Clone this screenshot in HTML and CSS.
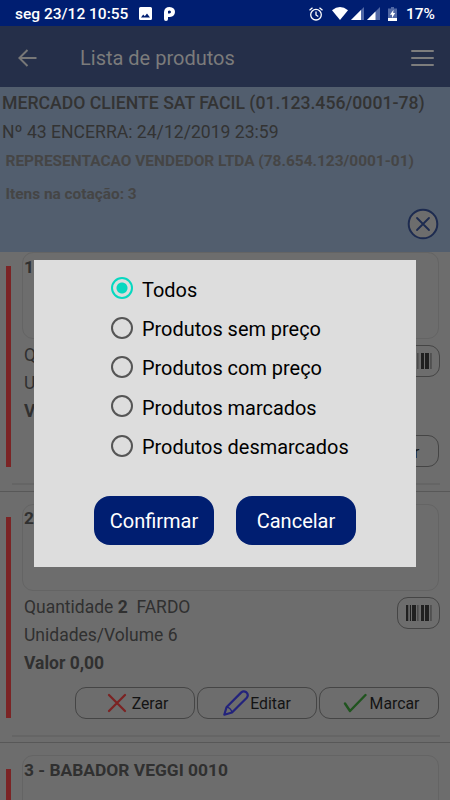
FILE: index.html
```html
<!DOCTYPE html>
<html lang="pt-BR">
<head>
<meta charset="utf-8">
<title>Lista de produtos</title>
<link rel="stylesheet" href="styles.css">
</head>
<body>
<svg class="defs" width="0" height="0">
  <symbol id="barcode" viewBox="0 0 26 16"><path fill="#202020" d="M0 0h2v16H0zM4 0h1v16H4zM6 0h4v16H6zM15 0h3v16h-3zM19 0h4v16h-4z"/><path fill="#444" d="M2.5 0h.7v16h-.7zM11 0h.8v16H11zM12.5 0h.6v16h-.6zM24 0h.7v16h-.7zM25.3 0h.6v16h-.6z"/></symbol>
  <symbol id="cross" viewBox="0 0 20 20"><path d="M2 2 18 18M18 2 2 18" fill="none" stroke="#7c2222" stroke-width="2.2" stroke-linecap="round"/></symbol>
  <symbol id="pencil" viewBox="0 0 26 26"><path d="M1.3 24.7 3.500 17.200 18.300 2.400Q20.500.5 23.300 2.300 26 5 23.800 7.700L9 22.500Z" fill="none" stroke="#23237c" stroke-width="2.200" stroke-linejoin="round"/><path d="M3.500 17.200Q7.800 17.800 9 22.500" fill="none" stroke="#23237c" stroke-width="1.300"/></symbol>
  <symbol id="check" viewBox="0 0 24 20"><path d="M2 10.5 7 18 22.5 2" fill="none" stroke="#20541f" stroke-width="2.4" stroke-linecap="round" stroke-linejoin="round"/></symbol>
</svg>
<div class="screen">
  <div class="status">
    <span class="clock">seg 23/12 10:55</span>
    <svg class="st-photo" width="13" height="13" viewBox="0 0 13 13"><path fill="#fff" fill-rule="evenodd" d="M1.5 0h10Q13 0 13 1.5v10Q13 13 11.500 13h-10Q0 13 0 11.500v-10Q0 0 1.500 0zM2 10.500h9L8 6.500 5.800 9.300 4.200 7.500z"/></svg>
    <svg class="st-p" width="11" height="14" viewBox="0 0 11 14"><path fill="#fff" fill-rule="evenodd" d="M0 5Q.5 0 5.500 0 11 .3 11 5q-.3 4.500-5 5H4v2q0 2-2 2t-2-2zM4 4v2.500h1.500Q7 6.300 7 5T5.500 3.600Z"/></svg>
    <span class="grow"></span>
    <svg class="st-alarm" width="14" height="14" viewBox="0 0 14 14" fill="none" stroke="#fff" stroke-width="1.3"><circle cx="7" cy="7.700" r="5.300"/><path d="M7 4.500V8l2.300 1.500M.5 3.200 3.500.8M13.500 3.200 10.500.8"/></svg>
    <svg width="16" height="13" viewBox="0 0 16 13"><path fill="#fff" d="M8 13 0 3.200Q8-3.200 16 3.200z"/></svg>
    <svg class="st-sig" width="13" height="13" viewBox="0 0 13 13"><path fill="#5168a5" d="M13 0v13H0z"/><path fill="#fff" d="M10 3v10H0z"/></svg>
    <svg class="st-sig" width="13" height="13" viewBox="0 0 13 13"><path fill="#5168a5" d="M13 0v13H0z"/><path fill="#fff" d="M8.500 4.500V13H0z"/></svg>
    <svg class="st-bat" width="9" height="14" viewBox="0 0 9 14"><path fill="#5168a5" d="M3 0h3v1.500h3V11H0V1.500h3z"/><path fill="#fff" d="M0 11h9v3H0zM5.500 2.800 2 7.800h2V11l3.200-5H5.200z"/></svg>
    <span class="pct">17%</span>
  </div>
  <div class="appbar">
    <svg width="19" height="18" viewBox="0 0 19 18"><path d="M18.500 9H1.500M9.500 1 1.400 9 9.500 17" fill="none" stroke="#777" stroke-width="2"/></svg>
    <span class="title">Lista de produtos</span>
    <div class="burger"><i></i><i></i><i></i></div>
  </div>
  <div class="info">
    <div class="line client"><span>MERCADO CLIENTE SAT FACIL (01.123.456/0001-78)</span></div>
    <div class="line number"><span>Nº 43 ENCERRA: 24/12/2019 23:59</span></div>
    <div class="line seller"><span>REPRESENTACAO VENDEDOR LTDA (78.654.123/0001-01)</span></div>
    <div class="line count"><span>Itens na cotação: 3</span></div>
    <svg class="close" width="32" height="32" viewBox="0 0 32 32"><circle cx="16" cy="16" r="14.300" fill="#6d6d6d" stroke="#1d2b50" stroke-width="2"/><path d="m10 10 12 12M22 10 10 22" stroke="#1d2b50" stroke-width="1.800" stroke-linecap="round"/></svg>
  </div>
  <div class="list">
    <div class="item">
      <div class="bar"></div>
      <div class="body">
        <div class="name"><span>1</span></div>
        <div class="details">
          <div class="facts"><div><span>Quantidade <b>1</b></span></div><div><span>Unidades</span></div><div class="value"><span>Valor</span></div></div>
          <div class="scan"><svg width="26" height="16"><use href="#barcode"/></svg></div>
        </div>
        <div class="actions">
          <div class="btn"><svg width="24" height="20"><use href="#check"/></svg><span>Marcar</span></div>
        </div>
      </div>
    </div>
    <div class="item">
      <div class="bar"></div>
      <div class="body">
        <div class="name"><span>2</span></div>
        <div class="details">
          <div class="facts"><div><span>Quantidade <b>2</b>&nbsp; FARDO</span></div><div><span>Unidades/Volume 6</span></div><div class="value"><span>Valor 0,00</span></div></div>
          <div class="scan"><svg width="26" height="16"><use href="#barcode"/></svg></div>
        </div>
        <div class="actions">
          <div class="btn zero"><svg width="20" height="20"><use href="#cross"/></svg><span>Zerar</span></div>
          <div class="btn edit"><svg width="26" height="26"><use href="#pencil"/></svg><span>Editar</span></div>
          <div class="btn"><svg width="24" height="20"><use href="#check"/></svg><span>Marcar</span></div>
        </div>
      </div>
    </div>
    <div class="item">
      <div class="bar"></div>
      <div class="body">
        <div class="name"><span>3 - BABADOR VEGGI 0010</span></div>
      </div>
    </div>
  </div>
  <div class="dialog">
    <div class="options">
      <div class="option"><i class="radio on"></i><span>Todos</span></div>
      <div class="option"><i class="radio"></i><span>Produtos sem preço</span></div>
      <div class="option"><i class="radio"></i><span>Produtos com preço</span></div>
      <div class="option"><i class="radio"></i><span>Produtos marcados</span></div>
      <div class="option"><i class="radio"></i><span>Produtos desmarcados</span></div>
    </div>
    <div class="buttons"><div class="main">Confirmar</div><div class="main">Cancelar</div></div>
  </div>
</div>
</body>
</html>
```
FILE: styles.css
```css
* { box-sizing: border-box; }
body { margin: 0; font-family: Roboto, "Liberation Sans", sans-serif; background: #6d6d6d; }
svg { display: block; flex: none; }
.defs { position: absolute; }
.screen { position: relative; width: 450px; height: 800px; overflow: hidden; background: #6d6d6d; display: flex; flex-direction: column; }

.status { flex: none; height: 26px; background: #001e71; color: #fff; display: flex; align-items: center; padding: 1px 15px 0; font-size: 15.5px; font-weight: 500; }
.clock { width: 124px; white-space: nowrap; }
.st-p { margin-left: 12px; }
.grow { flex: 1; }
.st-alarm { margin-right: 9px; }
.st-sig { margin-left: 3px; }
.st-bat { margin: 0 9px 0 8px; }

.appbar { flex: none; height: 61px; background: #252f49; color: #7b7b7b; display: flex; align-items: center; padding: 3px 16px 0 18px; }
.title { margin-left: 43px; flex: 1; font-size: 20px; }
.burger { width: 23px; display: flex; flex-direction: column; gap: 5px; }
.burger i { height: 2px; background: #7d7d7d; border-radius: 1px; }

.info { flex: none; position: relative; height: 164.5px; background: #525e6e; color: #333; white-space: nowrap; }
.line { display: flex; align-items: center; }
.client { height: 32px; padding-left: 2px; font-size: 17.65px; font-weight: 500; }
.number { height: 25px; padding-left: 2px; font-size: 17.6px; }
.seller { height: 34px; padding-left: 5.5px; font-size: 15.45px; font-weight: 700; color: #454545; }
.count { height: 31px; padding-left: 5.5px; font-size: 15.4px; font-weight: 700; color: #454545; }
.close { position: absolute; left: 407px; top: 121px; }

.list { flex: 1; min-height: 0; overflow: hidden; color: #303030; }
.item { height: 251.5px; display: flex; border-bottom: 1px solid #585858; padding: 12px 10px 0 6px; }
.item:first-child { margin-top: -11.5px; }
.bar { width: 5px; height: 201px; margin-top: 13.5px; background: #7b2425; flex: none; }
.body { flex: 1; margin-left: 1px; height: 233px; border-bottom: 2px solid #656565; padding-left: 10px; }
.name { height: 87px; width: 417px; border: 1px solid #646464; border-radius: 11px; padding: 2.5px 0 0 1px; font-size: 17.4px; font-weight: 700; line-height: 22px; }
.details { height: 96px; display: flex; justify-content: space-between; padding-left: 2px; }
.facts { font-size: 17.5px; line-height: 28px; padding-top: 2px; }
.value { font-weight: 700; }
.scan { width: 43px; height: 32px; margin-top: 6px; border: 1px solid #454545; border-radius: 11px; display: flex; align-items: center; justify-content: center; }
.actions { display: flex; justify-content: flex-end; gap: 2px; margin-right: 1px; }
.btn { width: 120px; height: 32px; border: 1px solid #454545; border-radius: 11px; display: flex; align-items: center; justify-content: center; gap: 3px; padding-left: 4px; color: #141414; font-size: 15.8px; }
.btn span { padding-top: 2px; }
.btn.zero { gap: 5px; padding-left: 5px; }
.btn.edit { gap: 1px; padding-left: 0; }

.dialog { position: absolute; left: 33.5px; top: 260px; width: 382.5px; height: 306.5px; background: #ddd; padding: 9.5px 0 0 60.5px; }
.options { padding-left: 17px; }
.option { height: 39.4px; display: flex; align-items: center; font-size: 19.93px; color: #000; gap: 9px; }
.option span { padding-top: 2px; }
.radio { width: 22px; height: 22px; border: 2px solid #555; border-radius: 50%; margin-top: -2px; flex: none; }
.radio.on { border-color: #06d8c0; background: radial-gradient(circle, #06d8c0 5px, transparent 6px); }
.buttons { display: flex; gap: 22px; margin-top: 29.5px; }
.main { width: 120px; height: 49px; border-radius: 16px; background: #001e71; color: #fff; font-size: 20px; display: flex; align-items: center; justify-content: center; padding-top: 1px; }
```
